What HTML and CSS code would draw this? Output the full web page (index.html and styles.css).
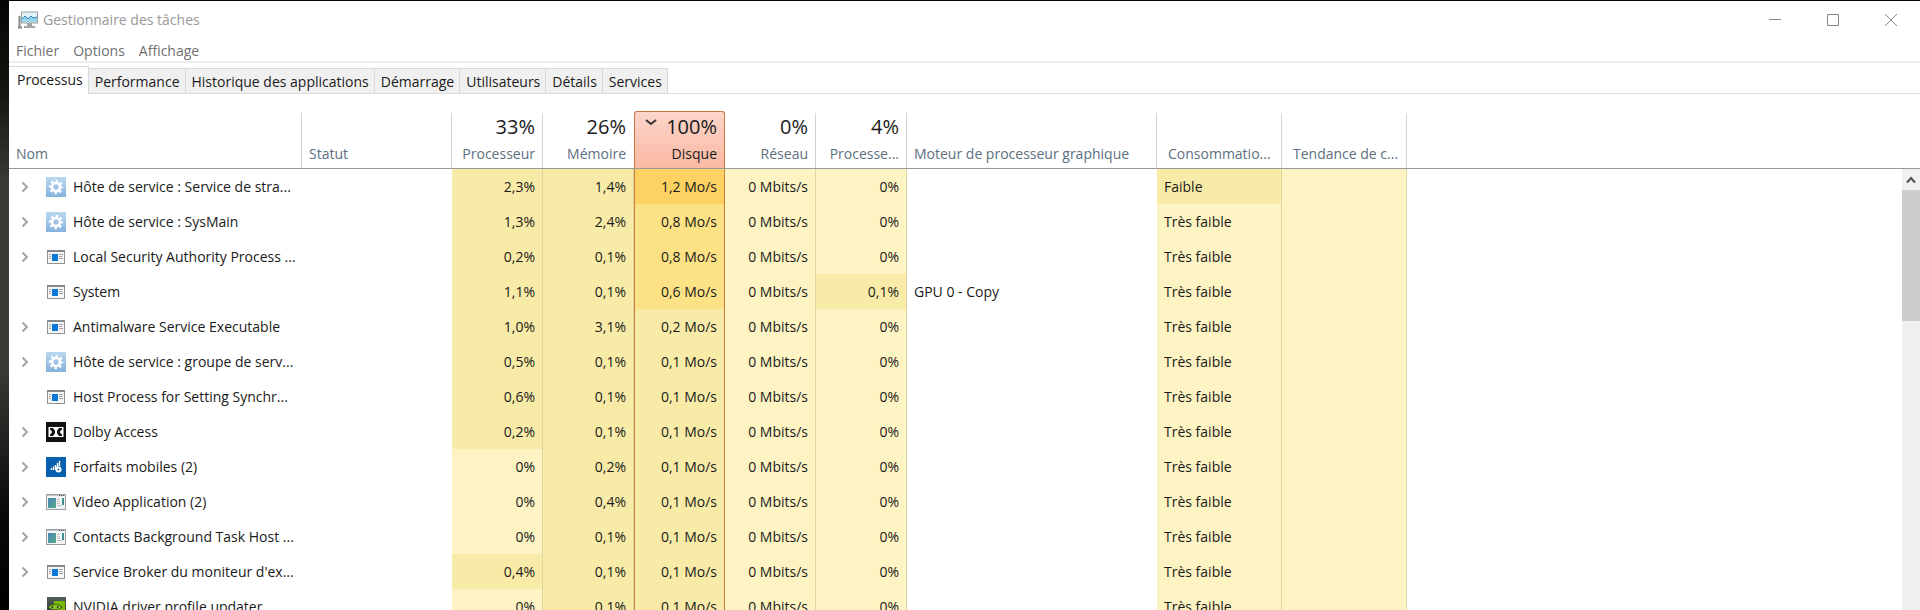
FILE: index.html
```html
<!DOCTYPE html>
<html lang="fr">
<head>
    <meta charset="UTF-8">
    <title>Gestionnaire des tâches</title>
    <link rel="stylesheet" href="styles.css">
</head>
<body>

<!-- Icônes partagées -->
<svg class="sprites" aria-hidden="true">
    <defs>
        <linearGradient id="gear-bg" x1="0" y1="0" x2="0" y2="1">
            <stop offset="0" stop-color="#b9d8f0"/>
            <stop offset="1" stop-color="#86b2de"/>
        </linearGradient>
        <linearGradient id="app-bg" x1="0" y1="0" x2="1" y2="1">
            <stop offset="0" stop-color="#4a86b4"/>
            <stop offset="1" stop-color="#56a88a"/>
        </linearGradient>
        <linearGradient id="nv-bg" x1="0" y1="0" x2="0" y2="1">
            <stop offset="0" stop-color="#566058"/>
            <stop offset="1" stop-color="#26302a"/>
        </linearGradient>
    </defs>
    <symbol id="arrow" viewBox="0 0 8 12">
        <path d="M1.5 1.5L6 6L1.5 10.5" fill="none" stroke="#a3a3a3" stroke-width="2"/>
    </symbol>
    <symbol id="gear" viewBox="0 0 20 20">
        <rect width="20" height="20" fill="url(#gear-bg)"/>
        <circle cx="10" cy="10" r="4" fill="none" stroke="#fff" stroke-width="2.6"/>
        <circle cx="10" cy="10" r="6" fill="none" stroke="#fff" stroke-width="2.4" stroke-dasharray="2.5 2.212" stroke-dashoffset="1.2"/>
    </symbol>
    <symbol id="window" viewBox="0 0 20 20">
        <rect x="1.5" y="3.5" width="17" height="13" fill="#f6f6f6" stroke="#8f9396"/>
        <path d="M1 4h18" stroke="#85898c" stroke-width="2"/>
        <rect x="6" y="7" width="6" height="7" fill="#0a78d7"/>
        <path d="M3 7.5h2M3 9.5h2M3 11.5h2M13 7.5h4M13 9.5h3M13 11.5h4" stroke="#a5a5a5"/>
    </symbol>
    <symbol id="app" viewBox="0 0 20 20">
        <rect x=".5" y="2.5" width="19" height="15" fill="#f4f5f6" stroke="#9a9ea2"/>
        <path d="M1 3.5h18" stroke="#c3c8cd"/>
        <path d="M13 3.5h1M15 3.5h1M17 3.5h1" stroke="#555"/>
        <rect x="2" y="6" width="8" height="10" fill="url(#app-bg)"/>
        <path d="M11 7.5h3M11 9.5h3M11 11.5h3M11 13.5h5" stroke="#c4c4c4"/>
        <rect x="16" y="6" width="2" height="7" fill="#3f8f92"/>
    </symbol>
    <symbol id="dolby" viewBox="0 0 20 20">
        <rect width="20" height="20" fill="#111"/>
        <path d="M2.500 5h15v10h-15z" fill="#fff"/>
        <path d="M4 6q5 0 5 4t-5 4zM16 6q-5 0-5 4t5 4z" fill="#111"/>
        <path d="M4 6h3l2 4-2 4H4V6zM16 6h-3l-2 4 2 4h3z" fill="#111"/>
        <path d="M3 7q6 3 0 6zM17 7q-6 3 0 6z" fill="#fff"/>
    </symbol>
    <symbol id="mobile" viewBox="0 0 20 20">
        <rect width="20" height="20" fill="#0560b0"/>
        <path d="M5.500 13v-2M7.500 13v-3.500M9.500 13v-5M11.500 11v-5M13.500 9v-5" stroke="#fff" stroke-width="1.400"/>
        <circle cx="12.500" cy="12.500" r="3" fill="#fff"/>
        <circle cx="12.500" cy="12.500" r="1" fill="#0560b0"/>
    </symbol>
    <symbol id="nvidia" viewBox="0 0 20 20">
        <rect x="1" width="19" height="20" fill="url(#nv-bg)"/>
        <path d="M8 4h11v12H8z" fill="#76b900"/>
        <path d="M2 10q6-6 15 0q-8 6-15 0z" fill="#2d3a20"/>
        <path d="M3.500 10q5-4 11 0q-6 4-11 0z" fill="none" stroke="#8ccb20" stroke-width="1.200"/>
        <circle cx="9" cy="10" r="2" fill="#8ccb20"/>
    </symbol>
</svg>

<div class="window">
    <header class="title-bar">
        <svg class="logo" width="20" height="18" viewBox="0 0 20 18" aria-hidden="true">
            <path d="M1.500 5v11M0 16.500h4" stroke="#7d8a86" stroke-width="2"/>
            <rect x="3.500" y="1" width="16" height="11" fill="#e3f3fa" stroke="#9a9d9f"/>
            <path d="M4 8l3-3 3 3 3-3 2 2 4-1v5H4z" fill="#9bd3ea"/>
            <path d="M4 8l3-3 3 3 3-3 2 2 4-1" fill="none" stroke="#2a86b8"/>
            <path d="M9 12h5v3h3v2H6v-2h3z" fill="#a3a5a7"/>
        </svg>
        <h1>Gestionnaire des tâches</h1>
        <div class="window-buttons">
            <button type="button" aria-label="Réduire"><svg width="12" height="12" viewBox="0 0 12 12"><path d="M0 5.500h12"/></svg></button>
            <button type="button" aria-label="Agrandir"><svg width="12" height="12" viewBox="0 0 12 12"><path d="M.5.500h11v11H.5z"/></svg></button>
            <button type="button" aria-label="Fermer"><svg width="12" height="12" viewBox="0 0 12 12"><path d="M0 0l12 12M12 0L0 12"/></svg></button>
        </div>
    </header>

    <nav class="menu">
        <a href="#">Fichier</a>
        <a href="#">Options</a>
        <a href="#">Affichage</a>
    </nav>

    <div class="tabs" role="tablist">
        <button type="button" role="tab" class="tab active" aria-selected="true">Processus</button>
        <button type="button" role="tab" class="tab">Performance</button>
        <button type="button" role="tab" class="tab">Historique des applications</button>
        <button type="button" role="tab" class="tab">Démarrage</button>
        <button type="button" role="tab" class="tab">Utilisateurs</button>
        <button type="button" role="tab" class="tab">Détails</button>
        <button type="button" role="tab" class="tab">Services</button>
    </div>

    <main class="content">
        <table class="processes">
            <colgroup>
                <col class="col-name">
                <col class="col-status">
                <col class="col-value" span="5">
                <col class="col-engine">
                <col class="col-power" span="2">
                <col>
            </colgroup>
            <thead>
                <tr>
                    <th><div class="head">Nom</div></th>
                    <th><div class="head">Statut</div></th>
                    <th class="num"><div class="head"><span class="total">33%</span>Processeur</div></th>
                    <th class="num"><div class="head before-sorted"><span class="total">26%</span>Mémoire</div></th>
                    <th class="num"><div class="head sorted">
                        <svg class="sort" width="12" height="7" viewBox="0 0 12 7"><path d="M1 1l5 4 5-4"/></svg>
                        <span class="total">100%</span>Disque</div></th>
                    <th class="num"><div class="head"><span class="total">0%</span>Réseau</div></th>
                    <th class="num"><div class="head"><span class="total">4%</span>Processe...</div></th>
                    <th><div class="head">Moteur de processeur graphique</div></th>
                    <th><div class="head power">Consommatio...</div></th>
                    <th><div class="head power">Tendance de c...</div></th>
                    <th></th>
                </tr>
            </thead>
            <tbody>
                <tr>
                    <td><div class="name"><button type="button" class="expand" aria-label="Développer"><svg><use href="#arrow"/></svg></button><svg class="icon"><use href="#gear"/></svg>Hôte de service : Service de stra...</div></td>
                    <td></td>
                    <td class="num heat1">2,3%</td>
                    <td class="num heat1">1,4%</td>
                    <td class="num disk heat3">1,2 Mo/s</td>
                    <td class="num heat0">0 Mbits/s</td>
                    <td class="num heat0">0%</td>
                    <td></td>
                    <td class="heat1">Faible</td>
                    <td class="heat0"></td>
                    <td></td>
                </tr>
                <tr>
                    <td><div class="name"><button type="button" class="expand" aria-label="Développer"><svg><use href="#arrow"/></svg></button><svg class="icon"><use href="#gear"/></svg>Hôte de service : SysMain</div></td>
                    <td></td>
                    <td class="num heat1">1,3%</td>
                    <td class="num heat1">2,4%</td>
                    <td class="num disk heat2">0,8 Mo/s</td>
                    <td class="num heat0">0 Mbits/s</td>
                    <td class="num heat0">0%</td>
                    <td></td>
                    <td class="heat0">Très faible</td>
                    <td class="heat0"></td>
                    <td></td>
                </tr>
                <tr>
                    <td><div class="name"><button type="button" class="expand" aria-label="Développer"><svg><use href="#arrow"/></svg></button><svg class="icon"><use href="#window"/></svg>Local Security Authority Process ...</div></td>
                    <td></td>
                    <td class="num heat1">0,2%</td>
                    <td class="num heat1">0,1%</td>
                    <td class="num disk heat2">0,8 Mo/s</td>
                    <td class="num heat0">0 Mbits/s</td>
                    <td class="num heat0">0%</td>
                    <td></td>
                    <td class="heat0">Très faible</td>
                    <td class="heat0"></td>
                    <td></td>
                </tr>
                <tr>
                    <td><div class="name single"><svg class="icon"><use href="#window"/></svg>System</div></td>
                    <td></td>
                    <td class="num heat1">1,1%</td>
                    <td class="num heat1">0,1%</td>
                    <td class="num disk heat2">0,6 Mo/s</td>
                    <td class="num heat0">0 Mbits/s</td>
                    <td class="num heat1">0,1%</td>
                    <td>GPU 0 - Copy</td>
                    <td class="heat0">Très faible</td>
                    <td class="heat0"></td>
                    <td></td>
                </tr>
                <tr>
                    <td><div class="name"><button type="button" class="expand" aria-label="Développer"><svg><use href="#arrow"/></svg></button><svg class="icon"><use href="#window"/></svg>Antimalware Service Executable</div></td>
                    <td></td>
                    <td class="num heat1">1,0%</td>
                    <td class="num heat1">3,1%</td>
                    <td class="num disk heat1">0,2 Mo/s</td>
                    <td class="num heat0">0 Mbits/s</td>
                    <td class="num heat0">0%</td>
                    <td></td>
                    <td class="heat0">Très faible</td>
                    <td class="heat0"></td>
                    <td></td>
                </tr>
                <tr>
                    <td><div class="name"><button type="button" class="expand" aria-label="Développer"><svg><use href="#arrow"/></svg></button><svg class="icon"><use href="#gear"/></svg>Hôte de service : groupe de serv...</div></td>
                    <td></td>
                    <td class="num heat1">0,5%</td>
                    <td class="num heat1">0,1%</td>
                    <td class="num disk heat1">0,1 Mo/s</td>
                    <td class="num heat0">0 Mbits/s</td>
                    <td class="num heat0">0%</td>
                    <td></td>
                    <td class="heat0">Très faible</td>
                    <td class="heat0"></td>
                    <td></td>
                </tr>
                <tr>
                    <td><div class="name single"><svg class="icon"><use href="#window"/></svg>Host Process for Setting Synchr...</div></td>
                    <td></td>
                    <td class="num heat1">0,6%</td>
                    <td class="num heat1">0,1%</td>
                    <td class="num disk heat1">0,1 Mo/s</td>
                    <td class="num heat0">0 Mbits/s</td>
                    <td class="num heat0">0%</td>
                    <td></td>
                    <td class="heat0">Très faible</td>
                    <td class="heat0"></td>
                    <td></td>
                </tr>
                <tr>
                    <td><div class="name"><button type="button" class="expand" aria-label="Développer"><svg><use href="#arrow"/></svg></button><svg class="icon"><use href="#dolby"/></svg>Dolby Access</div></td>
                    <td></td>
                    <td class="num heat1">0,2%</td>
                    <td class="num heat1">0,1%</td>
                    <td class="num disk heat1">0,1 Mo/s</td>
                    <td class="num heat0">0 Mbits/s</td>
                    <td class="num heat0">0%</td>
                    <td></td>
                    <td class="heat0">Très faible</td>
                    <td class="heat0"></td>
                    <td></td>
                </tr>
                <tr>
                    <td><div class="name"><button type="button" class="expand" aria-label="Développer"><svg><use href="#arrow"/></svg></button><svg class="icon"><use href="#mobile"/></svg>Forfaits mobiles (2)</div></td>
                    <td></td>
                    <td class="num heat0">0%</td>
                    <td class="num heat1">0,2%</td>
                    <td class="num disk heat1">0,1 Mo/s</td>
                    <td class="num heat0">0 Mbits/s</td>
                    <td class="num heat0">0%</td>
                    <td></td>
                    <td class="heat0">Très faible</td>
                    <td class="heat0"></td>
                    <td></td>
                </tr>
                <tr>
                    <td><div class="name"><button type="button" class="expand" aria-label="Développer"><svg><use href="#arrow"/></svg></button><svg class="icon"><use href="#app"/></svg>Video Application (2)</div></td>
                    <td></td>
                    <td class="num heat0">0%</td>
                    <td class="num heat1">0,4%</td>
                    <td class="num disk heat1">0,1 Mo/s</td>
                    <td class="num heat0">0 Mbits/s</td>
                    <td class="num heat0">0%</td>
                    <td></td>
                    <td class="heat0">Très faible</td>
                    <td class="heat0"></td>
                    <td></td>
                </tr>
                <tr>
                    <td><div class="name"><button type="button" class="expand" aria-label="Développer"><svg><use href="#arrow"/></svg></button><svg class="icon"><use href="#app"/></svg>Contacts Background Task Host ...</div></td>
                    <td></td>
                    <td class="num heat0">0%</td>
                    <td class="num heat1">0,1%</td>
                    <td class="num disk heat1">0,1 Mo/s</td>
                    <td class="num heat0">0 Mbits/s</td>
                    <td class="num heat0">0%</td>
                    <td></td>
                    <td class="heat0">Très faible</td>
                    <td class="heat0"></td>
                    <td></td>
                </tr>
                <tr>
                    <td><div class="name"><button type="button" class="expand" aria-label="Développer"><svg><use href="#arrow"/></svg></button><svg class="icon"><use href="#window"/></svg>Service Broker du moniteur d'ex...</div></td>
                    <td></td>
                    <td class="num heat1">0,4%</td>
                    <td class="num heat1">0,1%</td>
                    <td class="num disk heat1">0,1 Mo/s</td>
                    <td class="num heat0">0 Mbits/s</td>
                    <td class="num heat0">0%</td>
                    <td></td>
                    <td class="heat0">Très faible</td>
                    <td class="heat0"></td>
                    <td></td>
                </tr>
                <tr>
                    <td><div class="name single"><svg class="icon"><use href="#nvidia"/></svg>NVIDIA driver profile updater</div></td>
                    <td></td>
                    <td class="num heat0">0%</td>
                    <td class="num heat1">0,1%</td>
                    <td class="num disk heat1">0,1 Mo/s</td>
                    <td class="num heat0">0 Mbits/s</td>
                    <td class="num heat0">0%</td>
                    <td></td>
                    <td class="heat0">Très faible</td>
                    <td class="heat0"></td>
                    <td></td>
                </tr>
            </tbody>
        </table>

        <div class="scroll">
            <div class="scroll-head"></div>
            <button type="button" class="scroll-up" aria-label="Défiler vers le haut"><svg width="10" height="8" viewBox="0 0 10 8"><path d="M1 6.500l4-4.500 4 4.500"/></svg></button>
            <div class="scroll-thumb"></div>
        </div>
    </main>
</div>

</body>
</html>
```
FILE: styles.css
```css
* { box-sizing: border-box; }
body {
    margin: 0;
    height: 100vh;
    overflow: hidden;
    padding: 1px 0 0 9px;
    background: linear-gradient(#050505, #15140f 15%, #3b3a37 30%, #3b3a37 60%, #080807 85%, #000);
    font-family: "Segoe UI", "Open Sans", sans-serif;
    font-size: 14px;
    line-height: 20px;
    color: #1a1a1a;
}
button { font: inherit; color: inherit; background: none; border: none; padding: 0; }
svg { display: block; }
.sprites { position: absolute; width: 0; height: 0; }

.window { height: 100%; display: flex; flex-direction: column; background: #fff; }

/* Barre de titre */
.title-bar { display: flex; align-items: center; height: 37px; padding-left: 9px; color: #999; }
.title-bar h1 { margin: 0 0 0 5px; font-size: 14px; font-weight: normal; }
.window-buttons { display: flex; margin-left: auto; }
.window-buttons button { width: 58px; height: 36px; display: flex; align-items: center; justify-content: center; }
.window-buttons path { fill: none; stroke: #888; }

.menu { display: flex; gap: 14px; height: 25px; padding: 3px 7px 0; border-bottom: 2px solid #eee; }
.menu a { color: #707070; text-decoration: none; }

/* Onglets */
.tabs { display: flex; align-items: flex-end; height: 31px; border-bottom: 1px solid #dcdcdc; }
.tab { height: 25px; padding: 1px 5px 0 6px; background: #f0f0f0; border: 1px solid #d9d9d9; border-width: 1px 1px 0 0; }
.tab.active { height: 28px; margin-bottom: -1px; padding: 0 5px 2px 8px; background: #fff; }

/* Tableau */
.content { display: flex; flex: 1; min-height: 0; overflow: hidden; align-items: stretch; }
.processes { flex: 1; align-self: flex-start; table-layout: fixed; width: 0; border-collapse: separate; border-spacing: 0; }
.col-name { width: 293px; }
.col-status { width: 150px; }
.col-value { width: 91px; }
.col-engine { width: 250px; }
.col-power { width: 125px; }
th { height: 75px; padding: 0; border-bottom: 1px solid #999; vertical-align: bottom; text-align: left; font-weight: normal; color: #5c6f80; white-space: nowrap; }
.head { display: flex; flex-direction: column; justify-content: flex-end; height: 55px; padding: 0 7px 4px; border-right: 1px solid #d4d4d4; }
.head.power { padding-left: 11px; }
.num .head { align-items: flex-end; }
.total { font-size: 20px; line-height: 24px; margin-bottom: 5px; color: #1a1a1a; }
.head.before-sorted { border-right-color: transparent; }
.head.sorted {
    position: relative;
    height: 57px;
    color: #1a1a1a;
    background: linear-gradient(#fcd5ca, #f9b9a2);
    border: 1px solid #cf7446;
    border-bottom: none;
    border-radius: 3px 3px 0 0;
}
.sort { position: absolute; left: 10px; top: 7px; }
.sort path { fill: none; stroke: #333; stroke-width: 2; }

td { height: 35px; padding: 0 7px; border-right: 1px solid transparent; white-space: nowrap; }
.num { text-align: right; }
.heat0, .heat1, .heat2, .heat3 { border-right-color: #dfd5a0; }
.heat0 { background: #fdf3c3; }
.heat1 { background: #f7eba7; }
.heat2 { background: #fde285; }
.heat3 { background: #fed163; }
td.disk { border-left: 1px solid #c9803c; border-right-color: #c9803c; }
.name { display: flex; align-items: center; }
.name.single { padding-left: 30px; }
.expand { flex: none; width: 30px; height: 20px; padding-left: 5px; }
.expand svg { width: 8px; height: 12px; }
.icon { flex: none; width: 20px; height: 20px; margin-right: 7px; }

/* Barre de défilement */
.scroll { display: flex; flex-direction: column; width: 18px; background: #f0f0f0; }
.scroll-head { height: 75px; background: #fff; border-bottom: 1px solid #999; }
.scroll-up { height: 21px; display: flex; align-items: center; justify-content: center; }
.scroll-up path { fill: none; stroke: #505050; stroke-width: 2; }
.scroll-thumb { height: 131px; background: #cdcdcd; }
```
